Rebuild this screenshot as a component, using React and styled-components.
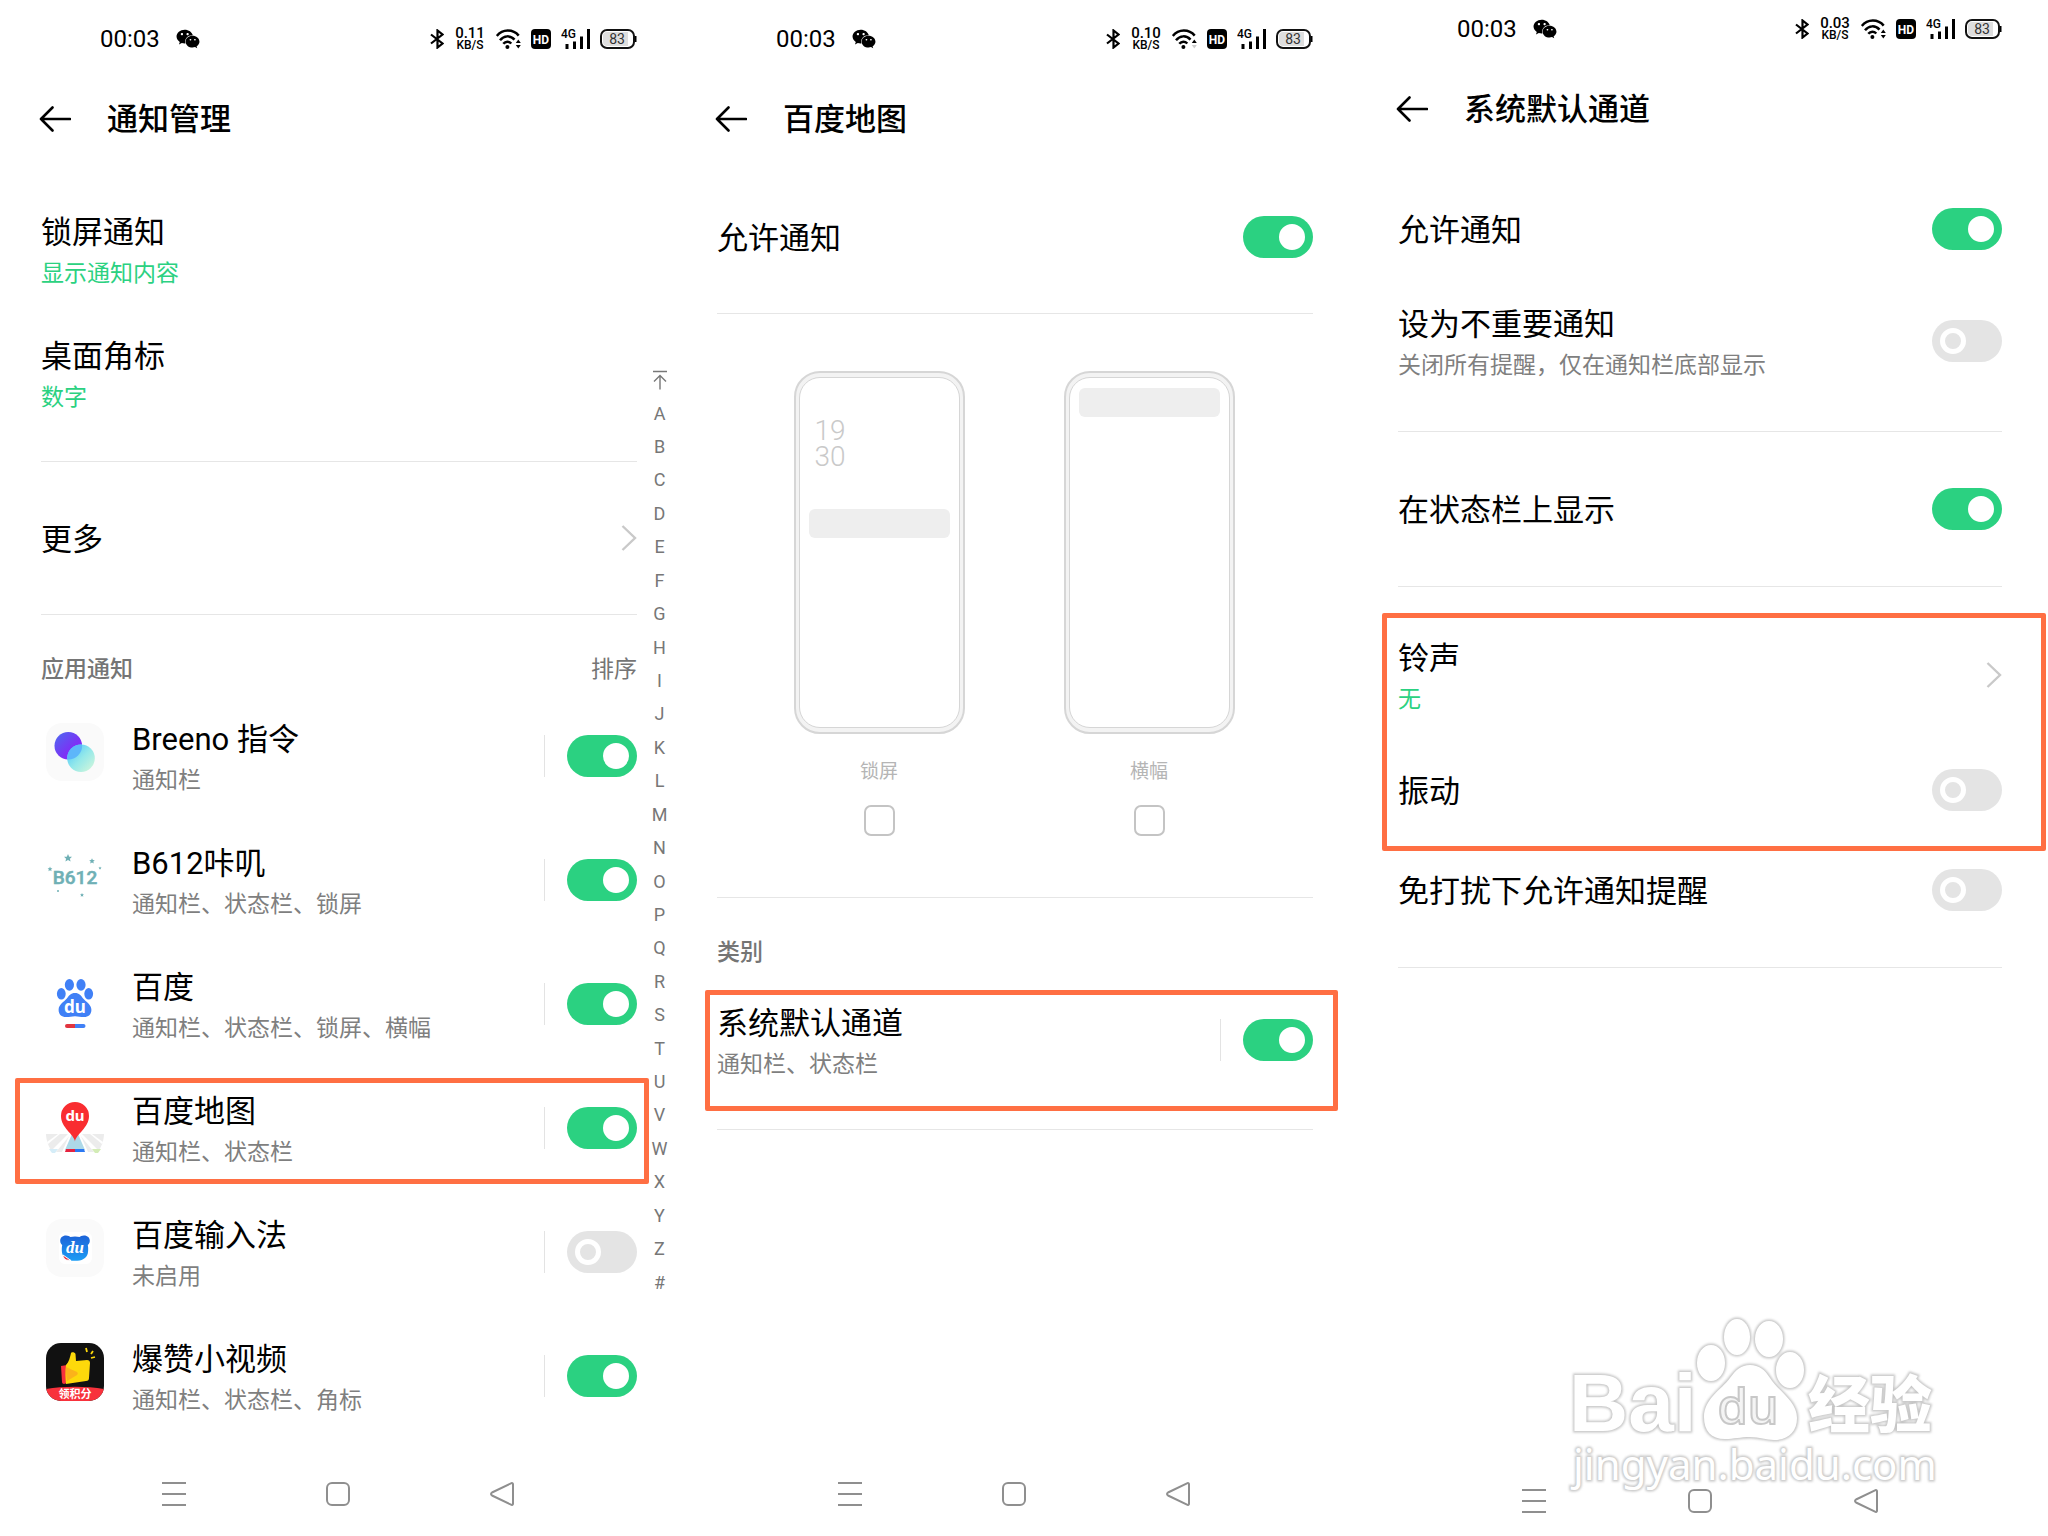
import React, { useId, useState } from "react";
import styled, { createGlobalStyle } from "styled-components";
import { FaWeixin } from "react-icons/fa";

const GREEN = "#2bd181";

const GlobalStyle = createGlobalStyle`
  *, *::before, *::after { box-sizing: border-box; }
  body {
    margin: 0;
    background: #fff;
    color: #000;
    font-family: Roboto, "Noto Sans CJK SC", sans-serif;
  }
  button {
    margin: 0;
    padding: 0;
    border: 0;
    background: none;
    color: inherit;
    font: inherit;
    text-align: left;
    cursor: pointer;
  }
  a { color: inherit; text-decoration: none; }
  svg { display: block; flex: none; }
`;

/* ---------- layout ---------- */

const Board = styled.div`
  display: grid;
  grid-template-columns: 676fr 676fr 696fr;
  min-height: 100vh;
`;

const Screen = styled.section`
  position: relative;
  display: flex;
  flex-direction: column;
  min-width: 0;
  padding-top: ${(p) => p.$top}px;
  --left: ${(p) => p.$left}px;
  --right: ${(p) => p.$right}px;
`;

const StatusBar = styled.div`
  display: flex;
  align-items: center;
  height: 58px;
  padding: 0 var(--right) 0 calc(var(--left) + 59px);
`;

const Time = styled.span`
  margin-right: 16px;
  font-size: 24px;
  line-height: 28px;
`;

const StatusIcons = styled.div`
  display: flex;
  align-items: center;
  gap: 10px;
  margin-left: auto;
`;

const Speed = styled.div`
  width: 32px;
  font-size: 15px;
  font-weight: 500;
  line-height: 12px;
  text-align: center;
  white-space: nowrap;
`;

const SpeedUnit = styled.div`
  font-size: 12px;
`;

const Header = styled.header`
  display: flex;
  align-items: center;
  gap: 36px;
  height: 102px;
  padding: 0 var(--right) 0 calc(var(--left) - 2px);
`;

const Title = styled.h1`
  margin: 0;
  padding-top: 2px;
  font-size: 31px;
  font-weight: 500;
  line-height: 44px;
`;

const Body = styled.div`
  display: flex;
  align-items: flex-start;
`;

const Content = styled.main`
  flex: 1;
  min-width: 0;
  padding: 0 ${(p) => (p.$flush ? "0" : "var(--right)")} 0 var(--left);
`;

const Stack = styled.div`
  display: flex;
  flex-direction: column;
  gap: ${(p) => p.$gap || 0}px;
  padding: ${(p) => p.$top || 0}px 0 ${(p) => p.$bottom || 0}px;
`;

const Divider = styled.hr`
  height: 1px;
  margin: 0;
  border: 0;
  background: #e6e6e6;
`;

const Name = styled.span`
  flex: 1;
  font-size: 31px;
  line-height: 44px;
`;

const Note = styled.span`
  color: ${(p) => (p.$accent ? GREEN : "#7f7f7f")};
  font-size: 23px;
  line-height: 38px;
`;

const Texts = styled.span`
  display: flex;
  flex: 1;
  flex-direction: column;
  align-self: flex-start;
  min-width: 0;
  padding-top: 4px;
`;

const DetailRow = styled.div`
  position: relative;
  display: flex;
  align-items: center;
  width: 100%;
  height: 124px;
  padding: 17px 0 23px;
`;

const SingleRow = styled.div`
  display: flex;
  align-items: center;
  width: 100%;
  height: ${(p) => p.$height || 100}px;

  ${Name} { padding-top: 4px; }
`;

const SectionHead = styled.div`
  display: flex;
  justify-content: space-between;
  padding: 38px 0 10px;
  color: #757575;
  font-size: 23px;
  line-height: 34px;
`;

const SectionTitle = styled.h2`
  margin: 0;
  font-size: 23px;
  font-weight: 500;
`;

const Switch = styled.input`
  position: relative;
  flex: none;
  width: 70px;
  height: 42px;
  margin: 0;
  border-radius: 21px;
  appearance: none;
  background: #e4e4e4;
  cursor: pointer;

  &::before {
    content: "";
    position: absolute;
    top: 8px;
    left: 8px;
    width: 26px;
    height: 26px;
    border: 5px solid #fff;
    border-radius: 50%;
  }
  &:checked { background: ${GREEN}; }
  &:checked::before {
    left: 36px;
    background: #fff;
  }
`;

const Split = styled.span`
  width: 1px;
  height: 42px;
  margin-right: 22px;
  background: #e3e3e3;
`;

const IconSlot = styled.span`
  align-self: flex-start;
  margin: 9px 28px 0 5px;
`;

const Group = styled.div`
  position: relative;
`;

const Highlight = styled.div`
  position: absolute;
  top: ${(p) => p.$box[0]}px;
  right: ${(p) => p.$box[1]}px;
  bottom: ${(p) => p.$box[2]}px;
  left: ${(p) => p.$box[3]}px;
  border: 5px solid #ff6f43;
  border-radius: 2px;
  pointer-events: none;
`;

const Index = styled.nav`
  display: flex;
  flex-direction: column;
  width: 39px;
  height: 936px;
  margin-top: 193px;
  padding-left: 6px;
  color: #777;
  font-size: 18px;
`;

const IndexLink = styled.a`
  display: flex;
  flex: 1;
  align-items: center;
  justify-content: center;
`;

const NavBar = styled.footer`
  display: flex;
  align-items: center;
  justify-content: center;
  gap: ${(p) => p.$gap}px;
  height: ${(p) => p.$height}px;
  margin-top: auto;
`;

/* ---------- lock screen / banner previews ---------- */

const Previews = styled.div`
  display: flex;
  justify-content: center;
  gap: 99px;
  padding: 57px 2px 61px 0;
`;

const Preview = styled.label`
  display: flex;
  flex-direction: column;
  align-items: center;
  color: #b5b5b5;
  font-size: 19px;
  line-height: 28px;
`;

const Phone = styled.span`
  display: block;
  width: 171px;
  height: 363px;
  margin-bottom: 24px;
  padding: 4px 3px;
  border: 2px solid #d6d6d6;
  border-radius: 26px;
  background: #f3f3f3;
`;

const PhoneScreen = styled.span`
  display: flex;
  flex-direction: column;
  height: 100%;
  padding: ${(p) => p.$top}px 9px 0;
  border: 1px solid #d6d6d6;
  border-radius: 21px;
  background: #fff;
`;

const PhoneClock = styled.span`
  padding: 0 0 39px 6px;
  color: #c9c9c9;
  font-size: 28px;
  font-weight: 300;
  line-height: 26px;
`;

const PhoneBanner = styled.span`
  height: 29px;
  border-radius: 6px;
  background: #eee;
`;

const CheckBox = styled.input`
  width: 31px;
  height: 31px;
  margin: 19px 0 0;
  border: 2px solid #c4c4c4;
  border-radius: 7px;
  appearance: none;
  background: #fff;
`;

const Watermark = styled.div`
  position: absolute;
  right: 104px;
  bottom: 32px;
  pointer-events: none;
`;

/* ---------- system icons ---------- */

const BluetoothIcon = () => (
  <svg width="14" height="20" viewBox="0 0 14 20" fill="none" stroke="#000" strokeWidth="2.2">
    <path d="M1 5.5 12.5 14.5 7.5 18.5V1.5l5 4L1 14.5" />
  </svg>
);

const WifiIcon = ({ idle }) => (
  <svg width="25" height="20" viewBox="0 0 25 20" fill="none" stroke="#000" strokeWidth="2.5">
    <path d="M.8 7C6.5-.2 17-.2 22.700 6.600M4 11.200c4-5 10.500-5 14.500-.6M7.300 14.800c2.400-2.800 5.600-2.800 8-.3" />
    <circle cx="11.400" cy="18" r="2" fill="#000" stroke="none" />
    <path d="m22.300 10.500 2.500 3.500h-5z" fill="#000" stroke="none" />
    <path d="m22.300 19.500 2.500-3.500h-5z" fill={idle ? "#ccc" : "#000"} stroke="none" />
  </svg>
);

const HdIcon = () => (
  <svg width="20" height="20" viewBox="0 0 20 20">
    <rect width="20" height="20" rx="4" />
    <text x="10" y="14.500" fill="#fff" fontSize="12" fontWeight="700" textAnchor="middle">HD</text>
  </svg>
);

const SignalIcon = () => (
  <svg width="29" height="28" viewBox="0 -4 29 28">
    <text x="0" y="9" fontSize="12" fontWeight="500">4G</text>
    <path d="M4.500 15h3v5h-3zM12 12.500h3V20h-3zM19 7.500h3V20h-3zM26 0h3v20h-3z" />
  </svg>
);

const BatteryIcon = () => (
  <svg width="37" height="20" viewBox="0 0 37 20">
    <rect x="1" y="1" width="33" height="18" rx="6" fill="#fff" stroke="#111" strokeWidth="2" />
    <path d="M7 3h21v14H7a4 4 0 0 1-4-4V7a4 4 0 0 1 4-4z" fill="#dedede" />
    <path d="M35 7h1.500v6H35z" />
    <text x="17" y="15" fontSize="14" textAnchor="middle" fill="#333">83</text>
  </svg>
);

const BackIcon = () => (
  <svg width="32" height="26" viewBox="0 0 32 26" fill="none" stroke="#000" strokeWidth="2.600" strokeLinecap="round" strokeLinejoin="round">
    <path d="M31 13H2M13.500 1.500 2 13l11.500 11.500" />
  </svg>
);

const ChevronIcon = () => (
  <svg width="16" height="26" viewBox="0 0 16 26" fill="none" stroke="#c9c9c9" strokeWidth="2.400">
    <path d="M1.500 1 14 13 1.500 25" />
  </svg>
);

const TopIcon = () => (
  <svg width="16" height="20" viewBox="0 0 16 20" fill="none" stroke="#777" strokeWidth="1.400">
    <path d="M1 1.500h14M8 19.500V6M2 11.500 8 5.500l6 6" />
  </svg>
);

const NavIcon = ({ d }) => (
  <svg width="24" height="24" viewBox="0 0 24 24" fill="none" stroke="#8f8f8f" strokeWidth="2" strokeLinejoin="round">
    <path d={d} />
  </svg>
);

/* ---------- app icons ---------- */

const AppSvg = (props) => <svg width="58" height="58" viewBox="0 0 58 58" aria-hidden="true" {...props} />;

const BreenoIcon = () => (
  <AppSvg>
    <defs>
      <linearGradient id="breeno-a" x1="0" y1="0" x2="1" y2="1">
        <stop offset="0" stopColor="#4a6df0" />
        <stop offset=".6" stopColor="#7c31f5" />
        <stop offset="1" stopColor="#9a1dfa" />
      </linearGradient>
      <linearGradient id="breeno-b" x1="0" y1="0" x2="1" y2="1">
        <stop offset=".1" stopColor="#52c8fb" />
        <stop offset=".5" stopColor="#93e8ea" />
        <stop offset="1" stopColor="#d9f8d9" />
      </linearGradient>
      <clipPath id="breeno-c"><circle cx="22.300" cy="22.700" r="13.800" /></clipPath>
    </defs>
    <rect width="58" height="58" rx="16" fill="#fafafa" />
    <circle cx="22.300" cy="22.700" r="13.800" fill="url(#breeno-a)" />
    <circle cx="35" cy="35.300" r="13.800" fill="url(#breeno-b)" />
    <circle cx="35" cy="35.300" r="13.800" fill="#5db6fa" clipPath="url(#breeno-c)" />
  </AppSvg>
);

const STAR = "M0-4 1.200-1.300 4-1.200 1.900.7 2.600 3.600 0 2-2.600 3.600-1.900.7-4-1.200-1.200-1.300z";

const B612Icon = () => (
  <AppSvg fill="#6fb0b5">
    <text x="29" y="37" fontSize="19" fontWeight="500" stroke="#6fb0b5" strokeWidth=".5" textAnchor="middle">B612</text>
    <path d={STAR} transform="translate(22 11)" />
    <path d={STAR} transform="translate(46 14) scale(.7)" />
    <path d={STAR} transform="translate(4 22) scale(.6)" />
    <path d={STAR} transform="translate(54 21) scale(.4)" />
    <path d={STAR} transform="translate(36 48) scale(.5)" />
    <circle cx="12" cy="44" r="1" />
  </AppSvg>
);

const BaiduIcon = () => (
  <AppSvg>
    <g fill="#4080f6">
      <ellipse cx="23.400" cy="13.800" rx="4.600" ry="5.900" />
      <ellipse cx="35" cy="13.800" rx="4.600" ry="5.900" />
      <ellipse cx="15.300" cy="22.800" rx="4.400" ry="5.800" />
      <ellipse cx="42.700" cy="22.800" rx="4.400" ry="5.800" />
      <path d="M29 22c4.300 0 6 2.600 8.400 5.800 2.300 3 8 5.500 8 11 0 4.700-3 7.300-7.400 7.300-3.800 0-5.500-.8-9-.8s-5.200.8-9 .8c-4.400 0-7.400-2.600-7.400-7.300 0-5.500 5.700-8 8-11C23 24.600 24.700 22 29 22z" />
      <path d="M29 53h8.500a2 2 0 0 1 0 4H29z" />
    </g>
    <path d="M29 53h-8a2 2 0 0 0 0 4h8z" fill="#e1353f" />
    <text x="29" y="42" fill="#fff" fontSize="17" fontWeight="700" textAnchor="middle" fontFamily="'Noto Sans'">du</text>
  </AppSvg>
);

const MapIcon = () => (
  <AppSvg>
    <path d="M0 39h58c0 5-2 12-6 18H6C2 51 0 44 0 39z" fill="#ececec" />
    <path d="M4 57 22 39h3L10 57zM54 57 36 39h-3l15 18zM1 47l11-8h2L2 49zM57 47l-11-8h-2l12 10z" fill="#fff" />
    <path d="M3 54h9l-3 4H6z" fill="#d5edf8" />
    <path d="M46 54h9l-3 4h-3z" fill="#d3ecb6" />
    <path d="M24 39h10l8 18H16z" fill="#fff" />
    <path d="M26 39h6l7 16H19z" fill="#add9e8" />
    <path d="M20 54h9v3H19z" fill="#e5233f" />
    <path d="M29 54h9l1 3H29z" fill="#2b78f2" />
    <path d="M29 46.500c-1-7.500-14-13.500-14-25.500a14 14 0 0 1 28 0c0 12-13 18-14 25.500z" fill="#f92d30" />
    <text x="29" y="26" fill="#fff" fontSize="15" fontWeight="700" textAnchor="middle" fontFamily="'Noto Sans'">du</text>
  </AppSvg>
);

const InputIcon = () => (
  <AppSvg>
    <defs>
      <linearGradient id="bear" x1="0" y1="0" x2="0" y2="1">
        <stop offset="0" stopColor="#1c63d8" />
        <stop offset="1" stopColor="#1c9df5" />
      </linearGradient>
    </defs>
    <rect width="58" height="58" rx="16" fill="#fafafa" />
    <rect x="13" y="13" width="33" height="32" rx="6" fill="#fff" />
    <path d="M20 16.500c2.200 0 3.600.8 4.400 1.600 2.800-.8 6.400-.8 9.200 0 .8-.8 2.200-1.600 4.400-1.600 3.600 0 5.800 2.300 5.800 5.200 0 2-.9 3.400-2 4.300.5 2.600.6 5.400 0 8.400-1.300 5-6 7.400-12.800 7.400S17.500 39.400 16.200 34.400c-.6-3-.5-5.800 0-8.400-1.100-.9-2-2.300-2-4.300 0-2.900 2.200-5.200 5.800-5.200z" fill="url(#bear)" />
    <path d="m17 36 8 5.500-5-.5c-2-1-3-3-3-5z" fill="#e8384a" stroke="#fff" strokeWidth="1" />
    <text x="29" y="34" fill="#fff" fontSize="17" fontWeight="700" fontStyle="italic" textAnchor="middle" fontFamily="'Liberation Serif'">du</text>
  </AppSvg>
);

const ThumbIcon = () => (
  <AppSvg>
    <defs>
      <clipPath id="thumb-card"><rect width="58" height="58" rx="15" /></clipPath>
    </defs>
    <g clipPath="url(#thumb-card)">
      <rect width="58" height="58" fill="#111" />
      <path d="M0 46c17-3 41-3 58 0v12H0z" fill="#f8323c" />
      <path d="m15 23 6-1 3 17-6 2c-1 0-2-1-2-2z" fill="#f6313c" />
      <path d="M20 22c3-3 4-8 5-12 .5-1.500 4-1 4.500 1l.5 7 11-1c2 0 3 1 3 3l-1 15c0 2-1 3-3 3l-20 3c-.5-6-1-12 0-19z" fill="#fdd90b" />
      <path d="m20 24 11 5c1 1 1 2 0 3l-10 6c-1-5-1-10-1-14z" fill="#fbb31a" />
      <path d="m40 5 1 4M47 8l-2 3M49 14l-4 1" stroke="#fdd90b" strokeWidth="1.800" />
      <text x="29" y="55" fill="#fff" fontSize="11" fontWeight="700" textAnchor="middle">领积分</text>
    </g>
  </AppSvg>
);

const WatermarkLogo = () => (
  <svg width="380" height="200" viewBox="0 0 380 200" role="img" aria-label="Baidu经验">
    <defs>
      <filter id="halo" x="-5%" y="-5%" width="110%" height="110%">
        <feGaussianBlur stdDeviation="1.200" />
      </filter>
      <g id="mark">
        <text x="5" y="127" fontSize="82" fontWeight="700" fontFamily="'Liberation Sans'">Bai</text>
        <ellipse cx="147" cy="59" rx="14" ry="18" />
        <ellipse cx="173" cy="33" rx="13" ry="18" />
        <ellipse cx="205" cy="35" rx="14" ry="18" />
        <ellipse cx="226" cy="66" rx="14" ry="18" />
        <path d="M186 61c9 0 15 5 20 13 8 13 27 23 27 40 0 14-9 22-23 22-8 0-14-3-24-3s-16 2-25 2c-14 0-21-8-21-22 0-18 17-27 26-39 6-8 11-13 20-13z" />
        <text x="244" y="124" fontSize="62" fontWeight="900">经验</text>
        <text x="9" y="176" fontSize="42" fontFamily="'Noto Sans'">jingyan.baidu.com</text>
      </g>
    </defs>
    <use href="#mark" fill="#c6c6c6" stroke="#c6c6c6" strokeWidth="3" filter="url(#halo)" />
    <use href="#mark" fill="#fff" />
    <text x="184" y="120" fontSize="49" fontWeight="500" textAnchor="middle" fontFamily="'Noto Sans'" fill="#f4f4f4" stroke="#c8c8c8" strokeWidth="2">du</text>
  </svg>
);

/* ---------- composed parts ---------- */

function Status({ speed, idle }) {
  return (
    <StatusBar>
      <Time>00:03</Time>
      <FaWeixin size={24} />
      <StatusIcons>
        <BluetoothIcon />
        <Speed>
          {speed}
          <SpeedUnit>KB/S</SpeedUnit>
        </Speed>
        <WifiIcon idle={idle} />
        <HdIcon />
        <SignalIcon />
        <BatteryIcon />
      </StatusIcons>
    </StatusBar>
  );
}

function TopBar({ title }) {
  return (
    <Header>
      <button type="button" aria-label="返回"><BackIcon /></button>
      <Title>{title}</Title>
    </Header>
  );
}

function Toggle({ id, initial }) {
  const [on, setOn] = useState(initial);
  return <Switch id={id} type="checkbox" role="switch" checked={on} onChange={() => setOn(!on)} />;
}

function ToggleRow({ name, on = false }) {
  const id = useId();
  return (
    <SingleRow>
      <Name as="label" htmlFor={id}>{name}</Name>
      <Toggle id={id} initial={on} />
    </SingleRow>
  );
}

function DetailToggleRow({ icon, name, note, on = false, split = true, highlight }) {
  const id = useId();
  return (
    <DetailRow>
      {icon && <IconSlot>{icon}</IconSlot>}
      <Texts as="label" htmlFor={id}>
        <Name>{name}</Name>
        <Note>{note}</Note>
      </Texts>
      {split && <Split />}
      <Toggle id={id} initial={on} />
      {highlight && <Highlight $box={highlight} />}
    </DetailRow>
  );
}

function DetailLinkRow({ name, note, chevron }) {
  return (
    <DetailRow as="button" type="button">
      <Texts>
        <Name>{name}</Name>
        <Note $accent>{note}</Note>
      </Texts>
      {chevron && <ChevronIcon />}
    </DetailRow>
  );
}

function SystemNav({ height, gap = 140 }) {
  return (
    <NavBar $height={height} $gap={gap}>
      <button type="button" aria-label="菜单"><NavIcon d="M0 1h24M0 12h24M0 23h24" /></button>
      <button type="button" aria-label="主屏幕"><NavIcon d="M6 1h12a5 5 0 0 1 5 5v12a5 5 0 0 1-5 5H6a5 5 0 0 1-5-5V6a5 5 0 0 1 5-5z" /></button>
      <button type="button" aria-label="返回上一级"><NavIcon d="M21 1.300 2 10.500c-1.300.8-1.300 2.200 0 3L21 22.700c1 .5 2 0 2-1V2.300c0-1-1-1.500-2-1z" /></button>
    </NavBar>
  );
}

const APPS = [
  { name: "Breeno 指令", note: "通知栏", on: true, icon: <BreenoIcon /> },
  { name: "B612咔叽", note: "通知栏、状态栏、锁屏", on: true, icon: <B612Icon /> },
  { name: "百度", note: "通知栏、状态栏、锁屏、横幅", on: true, icon: <BaiduIcon /> },
  { name: "百度地图", note: "通知栏、状态栏", on: true, icon: <MapIcon />, highlight: [9, -12, 9, -26] },
  { name: "百度输入法", note: "未启用", on: false, icon: <InputIcon /> },
  { name: "爆赞小视频", note: "通知栏、状态栏、角标", on: true, icon: <ThumbIcon /> },
];

const LETTERS = [..."ABCDEFGHIJKLMNOPQRSTUVWXYZ#"];

export default function App() {
  return (
    <>
      <GlobalStyle />
      <Board>
        <Screen $top={10} $left={41} $right={39}>
          <Status speed="0.11" />
          <TopBar title="通知管理" />
          <Body>
            <Content $flush>
              <Stack $top={20} $bottom={23}>
                <DetailLinkRow name="锁屏通知" note="显示通知内容" />
                <DetailLinkRow name="桌面角标" note="数字" />
              </Stack>
              <Divider />
              <SingleRow as="button" type="button" $height={152}>
                <Name>更多</Name>
                <ChevronIcon />
              </SingleRow>
              <Divider />
              <SectionHead>
                <SectionTitle>应用通知</SectionTitle>
                <button type="button">排序</button>
              </SectionHead>
              {APPS.map((app) => (
                <DetailToggleRow key={app.name} {...app} />
              ))}
            </Content>
            <Index>
              <IndexLink href="#" aria-label="顶部"><TopIcon /></IndexLink>
              {LETTERS.map((letter) => (
                <IndexLink key={letter} href="#">{letter}</IndexLink>
              ))}
            </Index>
          </Body>
          <SystemNav height={84} />
        </Screen>

        <Screen $top={10} $left={41} $right={39}>
          <Status speed="0.10" idle />
          <TopBar title="百度地图" />
          <Content>
            <Stack $top={17} $bottom={26}>
              <ToggleRow name="允许通知" on />
            </Stack>
            <Divider />
            <Previews>
              <Preview>
                <Phone>
                  <PhoneScreen $top={40}>
                    <PhoneClock>19<br />30</PhoneClock>
                    <PhoneBanner />
                  </PhoneScreen>
                </Phone>
                锁屏
                <CheckBox type="checkbox" />
              </Preview>
              <Preview>
                <Phone>
                  <PhoneScreen $top={10}>
                    <PhoneBanner />
                  </PhoneScreen>
                </Phone>
                横幅
                <CheckBox type="checkbox" />
              </Preview>
            </Previews>
            <Divider />
            <SectionHead>
              <SectionTitle>类别</SectionTitle>
            </SectionHead>
            <Stack $top={1} $bottom={24}>
              <DetailToggleRow name="系统默认通道" note="通知栏、状态栏" on highlight={[9, -25, -6, -12]} />
            </Stack>
            <Divider />
          </Content>
          <SystemNav height={84} />
        </Screen>

        <Screen $top={0} $left={46} $right={46}>
          <Status speed="0.03" />
          <TopBar title="系统默认通道" />
          <Content>
            <Stack $top={19} $bottom={25} $gap={3}>
              <ToggleRow name="允许通知" on />
              <DetailToggleRow name="设为不重要通知" note="关闭所有提醒，仅在通知栏底部显示" split={false} />
            </Stack>
            <Divider />
            <Stack $top={27} $bottom={27}>
              <ToggleRow name="在状态栏上显示" on />
            </Stack>
            <Divider />
            <Stack $top={29} $bottom={27}>
              <Group>
                <DetailLinkRow name="铃声" note="无" chevron />
                <ToggleRow name="振动" />
                <Highlight $box={[-3, -44, -11, -16]} />
              </Group>
              <ToggleRow name="免打扰下允许通知提醒" />
            </Stack>
            <Divider />
          </Content>
          <SystemNav height={70} gap={142} />
          <Watermark><WatermarkLogo /></Watermark>
        </Screen>
      </Board>
    </>
  );
}
